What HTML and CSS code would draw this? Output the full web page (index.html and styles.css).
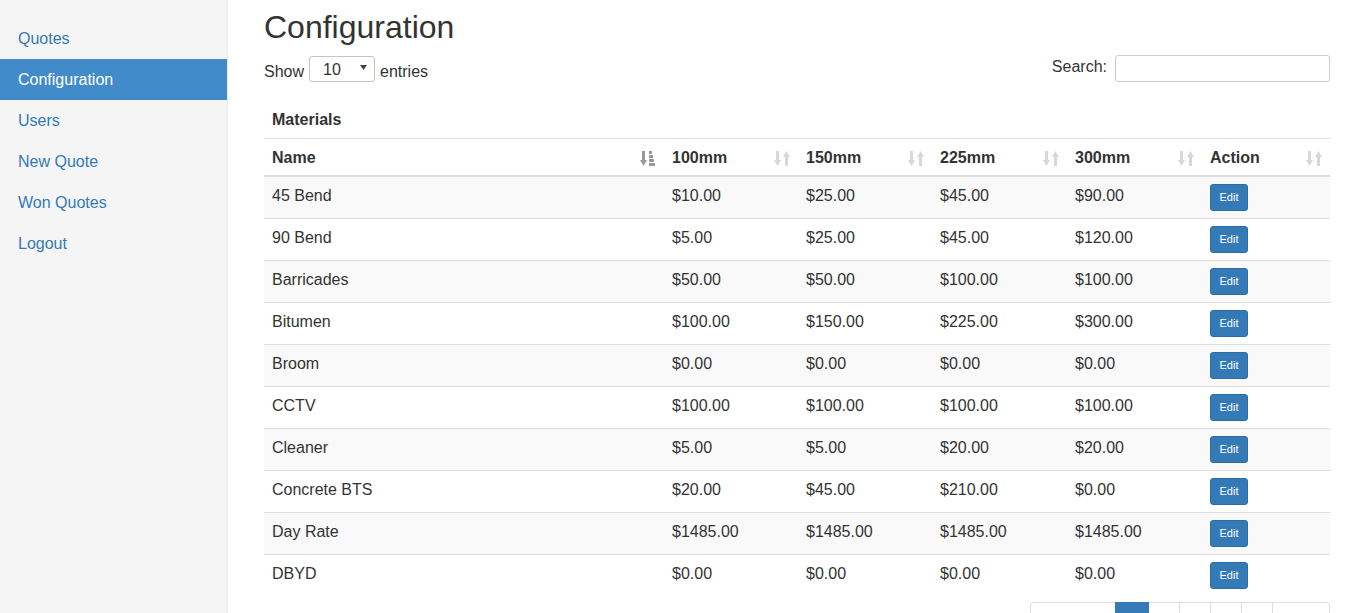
FILE: index.html
```html
<!DOCTYPE html>
<html>
<head>
<meta charset="utf-8">
<title>Configuration</title>
<link rel="stylesheet" href="styles.css">
</head>
<body>
<div class="page">
  <nav class="sidebar">
    <ul class="nav">
      <li><a href="#">Quotes</a></li>
      <li class="active"><a href="#">Configuration</a></li>
      <li><a href="#">Users</a></li>
      <li><a href="#">New Quote</a></li>
      <li><a href="#">Won Quotes</a></li>
      <li><a href="#">Logout</a></li>
    </ul>
  </nav>
  <main class="main">
    <h1 class="title">Configuration</h1>
    <div class="controls">
      <div class="length">
        <span class="lbl">Show</span>
        <div class="select"><span>10</span><svg class="caret" width="7" height="5" viewBox="0 0 7 5"><polygon points="0,0 7,0 3.5,5" fill="#444"/></svg></div>
        <span class="lbl">entries</span>
      </div>
      <div class="filter">
        <span class="lbl">Search:</span>
        <input class="search" type="search">
      </div>
    </div>

    <table class="table">
      <colgroup>
        <col class="c-name"><col class="c-num"><col class="c-num"><col class="c-num2"><col class="c-num2"><col>
      </colgroup>
      <thead>
        <tr class="group"><th colspan="6">Materials</th></tr>
        <tr class="heads">
          <th><div class="th"><span>Name</span><svg class="sort dark" width="16" height="17" viewBox="0 0 16 17"><rect x="2" y="1" width="3" height="10"/><polygon points="0,10 7,10 3.5,16"/><rect x="9" y="1" width="3" height="3"/><rect x="9" y="5" width="4" height="3"/><rect x="9" y="9" width="5" height="3"/><rect x="9" y="13" width="6" height="3"/></svg></div></th>
          <th><div class="th"><span>100mm</span><svg class="sort" width="16" height="17" viewBox="0 0 16 17"><rect x="2" y="1" width="3" height="10"/><polygon points="0,10 7,10 3.5,16"/><polygon points="9,7 16,7 12.5,1"/><rect x="11" y="7" width="3" height="9"/></svg></div></th>
          <th><div class="th"><span>150mm</span><svg class="sort" width="16" height="17" viewBox="0 0 16 17"><rect x="2" y="1" width="3" height="10"/><polygon points="0,10 7,10 3.5,16"/><polygon points="9,7 16,7 12.5,1"/><rect x="11" y="7" width="3" height="9"/></svg></div></th>
          <th><div class="th"><span>225mm</span><svg class="sort" width="16" height="17" viewBox="0 0 16 17"><rect x="2" y="1" width="3" height="10"/><polygon points="0,10 7,10 3.5,16"/><polygon points="9,7 16,7 12.5,1"/><rect x="11" y="7" width="3" height="9"/></svg></div></th>
          <th><div class="th"><span>300mm</span><svg class="sort" width="16" height="17" viewBox="0 0 16 17"><rect x="2" y="1" width="3" height="10"/><polygon points="0,10 7,10 3.5,16"/><polygon points="9,7 16,7 12.5,1"/><rect x="11" y="7" width="3" height="9"/></svg></div></th>
          <th><div class="th"><span>Action</span><svg class="sort" width="16" height="17" viewBox="0 0 16 17"><rect x="2" y="1" width="3" height="10"/><polygon points="0,10 7,10 3.5,16"/><polygon points="9,7 16,7 12.5,1"/><rect x="11" y="7" width="3" height="9"/></svg></div></th>
        </tr>
      </thead>
      <tbody>
        <tr><td>45 Bend</td><td>$10.00</td><td>$25.00</td><td>$45.00</td><td>$90.00</td><td><a class="btn" href="#">Edit</a></td></tr>
        <tr><td>90 Bend</td><td>$5.00</td><td>$25.00</td><td>$45.00</td><td>$120.00</td><td><a class="btn" href="#">Edit</a></td></tr>
        <tr><td>Barricades</td><td>$50.00</td><td>$50.00</td><td>$100.00</td><td>$100.00</td><td><a class="btn" href="#">Edit</a></td></tr>
        <tr><td>Bitumen</td><td>$100.00</td><td>$150.00</td><td>$225.00</td><td>$300.00</td><td><a class="btn" href="#">Edit</a></td></tr>
        <tr><td>Broom</td><td>$0.00</td><td>$0.00</td><td>$0.00</td><td>$0.00</td><td><a class="btn" href="#">Edit</a></td></tr>
        <tr><td>CCTV</td><td>$100.00</td><td>$100.00</td><td>$100.00</td><td>$100.00</td><td><a class="btn" href="#">Edit</a></td></tr>
        <tr><td>Cleaner</td><td>$5.00</td><td>$5.00</td><td>$20.00</td><td>$20.00</td><td><a class="btn" href="#">Edit</a></td></tr>
        <tr><td>Concrete BTS</td><td>$20.00</td><td>$45.00</td><td>$210.00</td><td>$0.00</td><td><a class="btn" href="#">Edit</a></td></tr>
        <tr><td>Day Rate</td><td>$1485.00</td><td>$1485.00</td><td>$1485.00</td><td>$1485.00</td><td><a class="btn" href="#">Edit</a></td></tr>
        <tr><td>DBYD</td><td>$0.00</td><td>$0.00</td><td>$0.00</td><td>$0.00</td><td><a class="btn" href="#">Edit</a></td></tr>
      </tbody>
    </table>

    <div class="footer">
      <ul class="pagination">
        <li class="prev"><a href="#">Previous</a></li>
        <li class="active"><a href="#">1</a></li>
        <li><a href="#">2</a></li>
        <li><a href="#">3</a></li>
        <li><a href="#">4</a></li>
        <li><a href="#">5</a></li>
        <li class="next"><a href="#">Next</a></li>
      </ul>
    </div>
  </main>
</div>
</body>
</html>
```

FILE: styles.css
```css
* { box-sizing: border-box; }
html, body {
  margin: 0;
  padding: 0;
  height: 613px;
  overflow: hidden;
  background: #fff;
}
body {
  font-family: "Liberation Sans", Arial, Helvetica, sans-serif;
  font-size: 16px;
  line-height: 1.42857;
  color: #333;
}
a { text-decoration: none; }

.page {
  display: flex;
  height: 613px;
}

.sidebar {
  width: 228px;
  flex: 0 0 228px;
  background: #f5f5f5;
  border-right: 1px solid #eaeaea;
  padding-top: 18px;
}
.nav {
  list-style: none;
  margin: 0;
  padding: 0;
}
.nav a {
  display: block;
  padding: 10px 18px;
  line-height: 21px;
  font-size: 16px;
  color: #337ab7;
}
.nav .active a {
  background: #428bca;
  color: #fff;
}

.main {
  flex: 1;
  padding: 0 36px;
  min-width: 0;
}

.title {
  font-size: 32px;
  font-weight: 400;
  line-height: 1.1;
  margin: 10px 0 10px;
  color: #333;
}

.controls {
  display: flex;
  justify-content: space-between;
  align-items: center;
  height: 27px;
}
.length, .filter {
  display: flex;
  align-items: center;
}
.length .lbl {
  padding-top: 8px;
}
.length .lbl:first-child { margin-right: 5px; }
.select {
  width: 66px;
  height: 26px;
  border: 1px solid #c4c4c4;
  border-radius: 3px;
  display: flex;
  align-items: center;
  justify-content: space-between;
  padding: 0 7px 0 13px;
  margin-right: 5px;
  font-size: 16px;
  background: #fff;
}
.select span { margin-top: 3px; }
.caret { margin-top: -3px; }
.filter .lbl { margin-right: 8px; padding-bottom: 2px; }
.search {
  width: 215px;
  height: 27px;
  border: 1px solid #ccc;
  border-radius: 3px;
  font-size: 14px;
  padding: 3px 6px;
  margin: 0;
}

.table {
  width: 100%;
  border-collapse: collapse;
  table-layout: fixed;
  margin-top: 17px;
}
.c-name { width: 400px; }
.c-num { width: 134px; }
.c-num2 { width: 135px; }

.table th {
  text-align: left;
  font-weight: 700;
  vertical-align: bottom;
}
.group th {
  padding: 10px 8px 6px;
  line-height: 22.85px;
  border-bottom: 1px solid #ddd;
}
.heads th {
  padding: 9px 8px 7px;
  line-height: 20px;
  border-bottom: 2px solid #ddd;
}
.th {
  display: flex;
  justify-content: space-between;
  align-items: center;
}
.sort { fill: #d8d8d8; flex: none; }
.sort.dark { fill: #999; }

.table td {
  padding: 8px 8px 7px;
  vertical-align: top;
  line-height: 22.85px;
  border-top: 1px solid #ddd;
}
.table tbody tr:first-child td { border-top: 0; }
.table tbody tr:nth-child(odd) { background: #f9f9f9; }

.btn {
  display: inline-block;
  vertical-align: top;
  width: 38px;
  height: 27px;
  margin-top: -1px;
  line-height: 25px;
  text-align: center;
  font-size: 11px;
  color: #fff;
  background: #337ab7;
  border: 1px solid #2e6da4;
  border-radius: 3px;
}

.footer {
  display: flex;
  justify-content: flex-end;
  margin-top: 6px;
}
.pagination {
  display: flex;
  list-style: none;
  margin: 0;
  padding: 0;
}
.pagination a {
  display: block;
  padding: 6px 0;
  font-size: 14px;
  line-height: 20px;
  color: #337ab7;
  border: 1px solid #ddd;
  margin-left: -1px;
  background: #fff;
  width: 32px;
  text-align: center;
}
.pagination .prev a {
  margin-left: 0;
  border-radius: 4px 0 0 4px;
  width: 86px;
  color: #777;
}
.pagination .next a {
  border-radius: 0 4px 4px 0;
  width: 58px;
}
.pagination .active a {
  background: #337ab7;
  border-color: #337ab7;
  color: #fff;
  position: relative;
  z-index: 1;
  width: 34px;
}
```
